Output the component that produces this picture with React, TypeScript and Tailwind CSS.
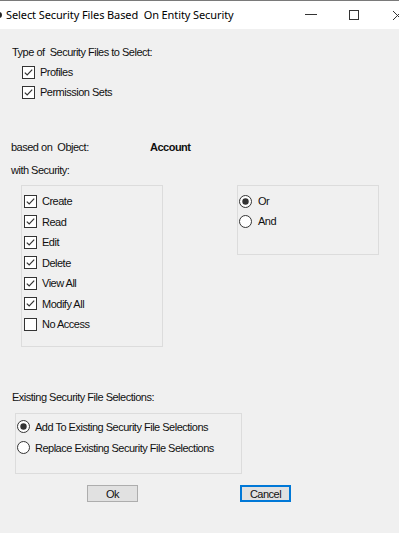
import React from "react";

function CheckBox({ checked }: { checked: boolean }) {
  return (
    <svg width="13" height="13" viewBox="0 0 13 13" className="shrink-0">
      <rect x="0.5" y="0.5" width="12" height="12" fill="#ffffff" stroke="#333333" strokeWidth="1" />
      {checked && (
        <polyline points="2.8,6.6 5.2,9 10.2,3.6" fill="none" stroke="#333333" strokeWidth="1.2" />
      )}
    </svg>
  );
}

function Radio({ checked }: { checked: boolean }) {
  return (
    <svg width="13" height="13" viewBox="0 0 13 13" className="shrink-0">
      <circle cx="6.5" cy="6.5" r="6" fill="#ffffff" stroke="#333333" strokeWidth="1" />
      {checked && <circle cx="6.5" cy="6.5" r="3.2" fill="#333333" />}
    </svg>
  );
}

function CheckRow({ label, checked, h = "h-[20px]" }: { label: string; checked: boolean; h?: string }) {
  return (
    <div className={`flex items-center gap-[5px] ${h}`}>
      <CheckBox checked={checked} />
      <span className="whitespace-pre">{label}</span>
    </div>
  );
}

export default function App() {
  const perms: [string, boolean][] = [
    ["Create", true],
    ["Read", true],
    ["Edit", true],
    ["Delete", true],
    ["View All", true],
    ["Modify All", true],
    ["No Access", false],
  ];
  return (
    <div
      className="w-[399px] h-[533px] bg-[#f0f0f0] overflow-hidden text-[11px] leading-[14px] text-[#111] tracking-[-0.5px]"
      style={{ fontFamily: '"Liberation Sans", Arial, sans-serif' }}
    >
      {/* Title bar */}
      <div className="relative h-[29px] bg-white border-t border-[#7a7a7a] flex items-center">
        <div className="absolute left-[-4px] top-[11px] w-[6px] h-[6px] rounded-full bg-[#222]" />
        <span
          className="ml-[6px] text-[11px] tracking-[-0.1px] whitespace-pre text-black"
          style={{ fontFamily: '"Noto Sans", "Open Sans", sans-serif' }}
        >
          Select Security Files Based  On Entity Security
        </span>
        <div className="absolute left-[305px] top-[13px] w-[12px] h-[1px] bg-[#333]" />
        <div className="absolute left-[349px] top-[9px] w-[10px] h-[10px] border border-[#333]" />
        <svg className="absolute left-[392px] top-[9px]" width="11" height="11" viewBox="0 0 11 11">
          <path d="M1 1 L10 10 M10 1 L1 10" stroke="#333" strokeWidth="1" />
        </svg>
      </div>

      {/* Type of files */}
      <div className="ml-[12px] mt-[16px] whitespace-pre">Type of  Security Files to Select:</div>
      <div className="ml-[22px] mt-[3px]">
        <CheckRow label="Profiles" checked />
        <CheckRow label="Permission Sets" checked />
      </div>

      {/* Object */}
      <div className="ml-[11px] mt-[38px] flex whitespace-pre">
        <span className="w-[139px]">based on  Object:</span>
        <span className="font-bold">Account</span>
      </div>
      <div className="ml-[11px] mt-[9px]">with Security:</div>

      <div className="mt-[8px] flex">
        <div className="ml-[21px] w-[142px] h-[162px] border border-[#dcdcdc] pt-[5px] pl-[2px]">
          {perms.map(([l, c]) => (
            <CheckRow key={l} label={l} checked={c} h="h-[20.5px]" />
          ))}
        </div>
        <div className="ml-[74px] w-[142px] h-[70px] border border-[#dcdcdc] pt-[5px] pl-[1px]">
          <div className="flex items-center gap-[6px] h-[20px]">
            <Radio checked />
            <span>Or</span>
          </div>
          <div className="flex items-center gap-[6px] h-[20px]">
            <Radio checked={false} />
            <span>And</span>
          </div>
        </div>
      </div>

      {/* Existing selections */}
      <div className="ml-[12px] mt-[43px]">Existing Security File Selections:</div>
      <div className="ml-[15px] mt-[9px] w-[227px] h-[61px] border border-[#dcdcdc] pt-[2px] pl-[1px]">
        <div className="flex items-center gap-[5px] h-[21px]">
          <Radio checked />
          <span>Add To Existing Security File Selections</span>
        </div>
        <div className="flex items-center gap-[5px] h-[21px]">
          <Radio checked={false} />
          <span>Replace Existing Security File Selections</span>
        </div>
      </div>

      {/* Buttons */}
      <div className="mt-[11px] flex">
        <button className="ml-[87px] w-[51px] h-[17px] bg-[#e1e1e1] border border-[#adadad] flex items-center justify-center text-[11px] leading-[14px]">
          Ok
        </button>
        <button className="ml-[102px] w-[51px] h-[17px] bg-[#e1e1e1] border-2 border-[#0078d7] flex items-center justify-center text-[11px] leading-[14px]">
          Cancel
        </button>
      </div>
    </div>
  );
}
